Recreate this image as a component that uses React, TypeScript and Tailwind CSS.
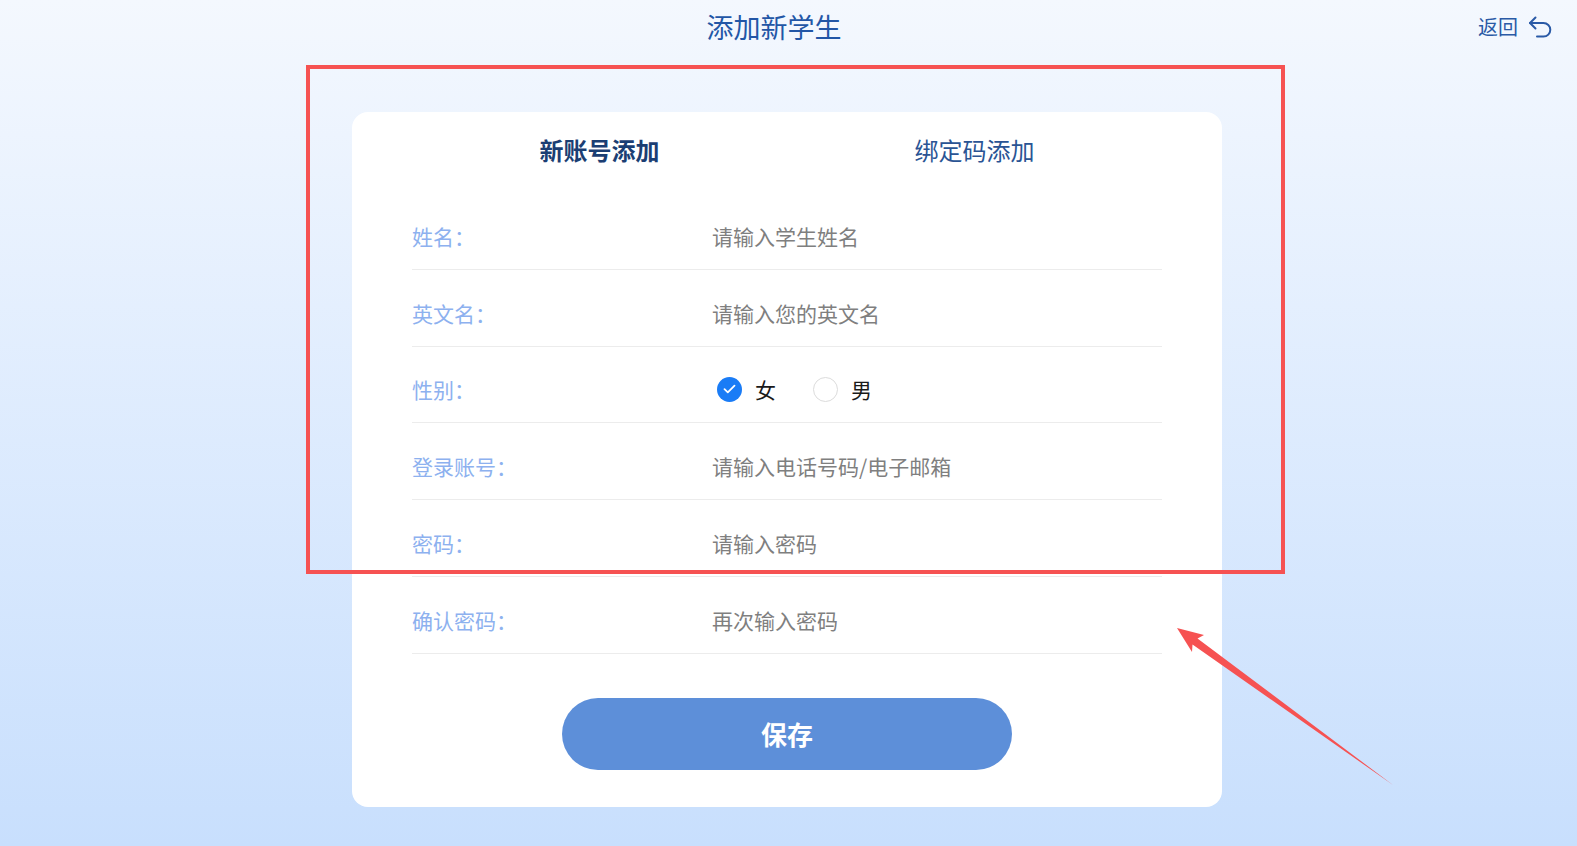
import React, { useState } from 'react';

const fields = [
  { label: '姓名：', placeholder: '请输入学生姓名' },
  { label: '英文名：', placeholder: '请输入您的英文名' },
  { label: '性别：', gender: true },
  { label: '登录账号：', placeholder: '请输入电话号码/电子邮箱' },
  { label: '密码：', placeholder: '请输入密码', type: 'password' },
  { label: '确认密码：', placeholder: '再次输入密码', type: 'password' },
];

const Radio: React.FC<{ checked: boolean; label: string; onClick: () => void }> = ({ checked, label, onClick }) => (
  <button type="button" onClick={onClick} className="flex items-center gap-[13px]">
    {checked ? (
      <span className="flex h-[25px] w-[25px] items-center justify-center rounded-full bg-[#1a7cf6]">
        <svg width="13" height="10" viewBox="0 0 13 10" fill="none">
          <path d="M1.5 5.2 4.8 8.3 11.5 1.7" stroke="#fff" strokeWidth="1.8" strokeLinecap="round" strokeLinejoin="round" />
        </svg>
      </span>
    ) : (
      <span className="h-[25px] w-[25px] rounded-full border border-[#dcdcdc] bg-white" />
    )}
    <span className="text-[21px] leading-[28px] text-[#1a1a1a]">{label}</span>
  </button>
);

const App: React.FC = () => {
  const [tab, setTab] = useState(0);
  const [gender, setGender] = useState<'f' | 'm'>('f');

  return (
    <div className="relative h-[846px] w-full overflow-hidden bg-linear-to-b from-[#f4f8fe] to-[#c8dffd] font-['Noto_Sans_CJK_SC',sans-serif]">
      {/* Header */}
      <header className="grid h-[54px] grid-cols-[1fr_auto_1fr] items-center">
        <div />
        <h1 className="mr-[29px] text-[27px] leading-[36px] font-normal text-[#2256a6]">添加新学生</h1>
        <button type="button" className="flex items-center gap-[10px] justify-self-end pr-[24px] text-[#2a5aa6]">
          <span className="text-[20px] leading-[28px]">返回</span>
          <svg width="25" height="23" viewBox="0 0 25 23" fill="none" stroke="currentColor" strokeWidth="2" strokeLinecap="round" strokeLinejoin="round">
            <path d="M7.5 1.5 2 7l5.5 5.5" />
            <path d="M2 7h13.5a6.8 6.8 0 0 1 0 13.6H9" />
          </svg>
        </button>
      </header>

      {/* Card */}
      <div className="mt-[58px] flex justify-center pr-[3px]">
        <div className="w-[870px] rounded-[16px] bg-white px-[60px] pb-[37px]">
          <div className="grid h-[81px] grid-cols-2 items-center pb-[6px]">
            {['新账号添加', '绑定码添加'].map((t, i) => (
              <button
                key={t}
                type="button"
                onClick={() => setTab(i)}
                className={
                  tab === i
                    ? 'text-center text-[24px] leading-[32px] font-bold text-[#1b3e73]'
                    : 'text-center text-[24px] leading-[32px] font-normal text-[#2a5494]'
                }
              >
                {t}
              </button>
            ))}
          </div>

          {fields.map((f) => (
            <div key={f.label} className="flex h-[76.8px] items-center border-b border-[#ececec] pt-[10px]">
              <span className="w-[300px] shrink-0 text-[21px] leading-[28px] text-[#8db1ef]">{f.label}</span>
              {f.gender ? (
                <div className="flex items-center gap-[37px] pl-[5px]">
                  <Radio checked={gender === 'f'} label="女" onClick={() => setGender('f')} />
                  <Radio checked={gender === 'm'} label="男" onClick={() => setGender('m')} />
                </div>
              ) : (
                <input
                  type={f.type ?? 'text'}
                  placeholder={f.placeholder}
                  className="flex-1 bg-transparent text-[21px] leading-[28px] text-[#333] outline-none placeholder:text-[#7f7f7f]"
                />
              )}
            </div>
          ))}

          <button
            type="button"
            className="mx-auto mt-[44px] flex h-[72px] w-[450px] items-center justify-center rounded-full bg-[#5d8fd9] text-[26px] font-bold text-white"
          >
            保存
          </button>
        </div>
      </div>

      {/* Annotation overlay */}
      <div className="pointer-events-none absolute left-[306px] top-[65px] h-[509px] w-[979px] border-4 border-[#f65252]" />
      <svg className="pointer-events-none absolute left-0 top-0" width="1577" height="846" viewBox="0 0 1577 846">
        <polygon
          points="1177,628 1204,635 1197.5,638.5 1393,785 1192.5,644.5 1192,652"
          fill="#f65252"
        />
      </svg>
    </div>
  );
};

export default App;
